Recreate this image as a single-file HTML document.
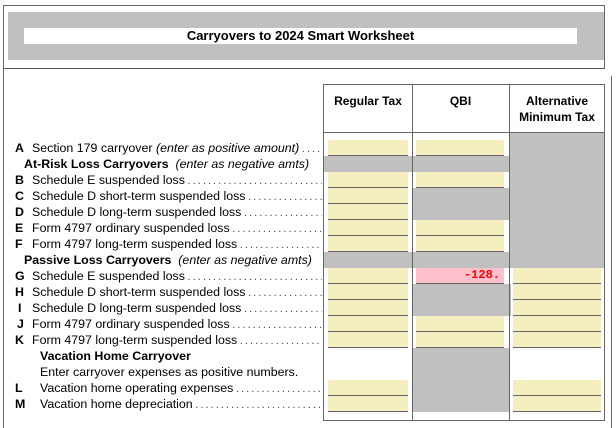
<!DOCTYPE html>
<html><head><meta charset="utf-8"><style>
*{margin:0;padding:0;box-sizing:border-box}
body{width:616px;height:428px;background:#fff;position:relative;overflow:hidden;font-family:"Liberation Sans",Arial,sans-serif;font-size:12.4px;color:#000}
.a{position:absolute}
.g{background:#c0c0c0}
.y{background:#f5efc0;border-bottom:1px solid #666;height:16px!important}
.lab{position:absolute;left:0;width:322px;height:16px;line-height:16px;white-space:nowrap;overflow:hidden}
.lab b{position:absolute;left:15px;font-weight:bold}
.lab span.t{position:absolute;left:32px;right:0;overflow:hidden}
.lab span.t::after{content:" . . . . . . . . . . . . . . . . . . . . . . . . . . . . . . . . . . . . . . . . . . . . . . . . . . . . . . . . . . . . . . . . . . . . . . . . . . . . . . . .";letter-spacing:-0.5px;color:#444;font-size:11px}
.lab.nd span.t::after{content:""}
.vl{position:absolute;width:1px;background:#666}
</style></head><body>
<div class="a" style="left:3px;top:5px;width:602px;height:64px;border:1px solid #666;border-bottom:1px solid #555"></div>
<div class="a" style="left:3px;top:68px;width:1px;height:360px;background:#666"></div>
<div class="a" style="left:611px;top:76px;width:1px;height:352px;background:#666"></div>
<div class="a g" style="left:8px;top:12px;width:596px;height:48px"></div>
<div class="a" style="left:24px;top:28px;width:553px;height:16px;background:#fff;text-align:center;font-weight:bold;font-size:13px;line-height:16px">Carryovers to 2024 Smart Worksheet</div>

<div class="a" style="left:323px;top:84px;width:282px;height:337px;border:1px solid #666"></div>
<div class="a" style="left:323px;top:132px;width:282px;height:1px;background:#666"></div>
<div class="a" style="left:324px;top:94px;width:88px;text-align:center;font-weight:bold;font-size:12px">Regular Tax</div>
<div class="a" style="left:412px;top:94px;width:97px;text-align:center;font-weight:bold;font-size:12px">QBI</div>
<div class="a" style="left:509px;top:93px;width:96px;text-align:center;font-weight:bold;font-size:12px;line-height:16px">Alternative<br>Minimum Tax</div>

<div class="a g" style="left:509px;top:133px;width:95px;height:135px"></div>
<div class="a g" style="left:324px;top:156px;width:280px;height:16px"></div>
<div class="a g" style="left:324px;top:252px;width:280px;height:16px"></div>
<div class="a g" style="left:412px;top:188px;width:97px;height:32px"></div>
<div class="a g" style="left:412px;top:284px;width:99px;height:32px"></div>
<div class="a g" style="left:412px;top:348px;width:97px;height:64px"></div>

<div class="a y" style="left:328px;top:140px;width:80px"></div>
<div class="a y" style="left:328px;top:172px;width:80px"></div>
<div class="a y" style="left:328px;top:188px;width:80px"></div>
<div class="a y" style="left:328px;top:204px;width:80px"></div>
<div class="a y" style="left:328px;top:220px;width:80px"></div>
<div class="a y" style="left:328px;top:236px;width:80px"></div>
<div class="a y" style="left:328px;top:268px;width:80px"></div>
<div class="a y" style="left:328px;top:284px;width:80px"></div>
<div class="a y" style="left:328px;top:300px;width:80px"></div>
<div class="a y" style="left:328px;top:316px;width:80px"></div>
<div class="a y" style="left:328px;top:332px;width:80px"></div>
<div class="a y" style="left:328px;top:380px;width:80px"></div>
<div class="a y" style="left:328px;top:396px;width:80px"></div>

<div class="a y" style="left:416px;top:140px;width:88px"></div>
<div class="a y" style="left:416px;top:172px;width:88px"></div>
<div class="a y" style="left:416px;top:220px;width:88px"></div>
<div class="a y" style="left:416px;top:236px;width:88px"></div>
<div class="a" style="left:416px;top:268px;width:88px;height:16px;background:#ffc0cb;border-bottom:1px solid #666;color:#f00;font-family:'Liberation Mono',monospace;font-weight:bold;font-size:12px;text-align:right;padding-right:4px;line-height:15px">-128.</div>
<div class="a y" style="left:416px;top:316px;width:88px"></div>
<div class="a y" style="left:416px;top:332px;width:88px"></div>

<div class="a y" style="left:513px;top:268px;width:88px"></div>
<div class="a y" style="left:513px;top:284px;width:88px"></div>
<div class="a y" style="left:513px;top:300px;width:88px"></div>
<div class="a y" style="left:513px;top:316px;width:88px"></div>
<div class="a y" style="left:513px;top:332px;width:88px"></div>
<div class="a y" style="left:513px;top:380px;width:88px"></div>
<div class="a y" style="left:513px;top:396px;width:88px"></div>

<div class="vl" style="left:412px;top:84px;height:337px"></div>
<div class="vl" style="left:509px;top:84px;height:337px"></div>

<div class="lab" style="top:140px"><b>A</b><span class="t">Section 179 carryover <i>(enter as positive amount)</i></span></div>
<div class="lab nd" style="top:156px"><span class="t" style="left:24px"><b style="position:static">At-Risk Loss Carryovers</b> &nbsp;<i>(enter as negative amts)</i></span></div>
<div class="lab" style="top:172px"><b>B</b><span class="t">Schedule E suspended loss</span></div>
<div class="lab" style="top:188px"><b>C</b><span class="t">Schedule D short-term suspended loss</span></div>
<div class="lab" style="top:204px"><b>D</b><span class="t">Schedule D long-term suspended loss</span></div>
<div class="lab" style="top:220px"><b>E</b><span class="t">Form 4797 ordinary suspended loss</span></div>
<div class="lab" style="top:236px"><b>F</b><span class="t">Form 4797 long-term suspended loss</span></div>
<div class="lab nd" style="top:252px"><span class="t" style="left:24px"><b style="position:static">Passive Loss Carryovers</b> &nbsp;<i>(enter as negative amts)</i></span></div>
<div class="lab" style="top:268px"><b>G</b><span class="t">Schedule E suspended loss</span></div>
<div class="lab" style="top:284px"><b>H</b><span class="t">Schedule D short-term suspended loss</span></div>
<div class="lab" style="top:300px"><b style="left:18px">I</b><span class="t">Schedule D long-term suspended loss</span></div>
<div class="lab" style="top:316px"><b style="left:17px">J</b><span class="t">Form 4797 ordinary suspended loss</span></div>
<div class="lab" style="top:332px"><b>K</b><span class="t">Form 4797 long-term suspended loss</span></div>
<div class="lab nd" style="top:348px"><span class="t" style="left:40px"><b style="position:static">Vacation Home Carryover</b></span></div>
<div class="lab nd" style="top:364px"><span class="t" style="left:40px">Enter carryover expenses as positive numbers.</span></div>
<div class="lab" style="top:380px"><b>L</b><span class="t" style="left:40px">Vacation home operating expenses</span></div>
<div class="lab" style="top:396px"><b>M</b><span class="t" style="left:40px">Vacation home depreciation</span></div>
</body></html>
